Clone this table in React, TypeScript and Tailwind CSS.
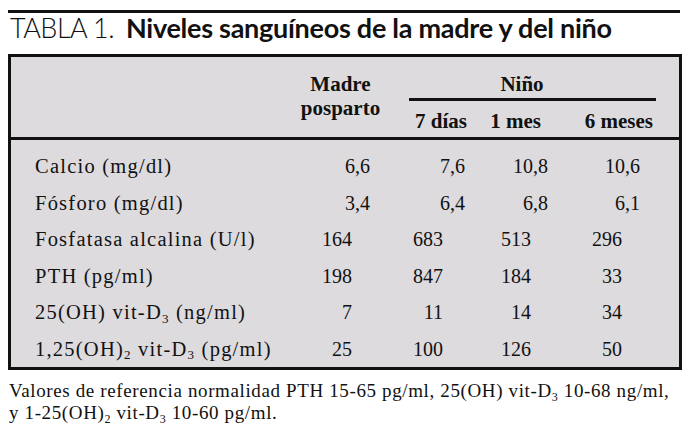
import React from "react";

type Cell = { v: string; dec: boolean };
const serif = "font-['Liberation_Serif','Times_New_Roman',serif]";

const D3 = () => (
  <>
    vit-D<sub className="text-[13px] bottom-[-0.3em]">3</sub>
  </>
);

const rows: { label: React.ReactNode; cells: Cell[] }[] = [
  {
    label: "Calcio (mg/dl)",
    cells: [
      { v: "6,6", dec: true },
      { v: "7,6", dec: true },
      { v: "10,8", dec: true },
      { v: "10,6", dec: true },
    ],
  },
  {
    label: "Fósforo (mg/dl)",
    cells: [
      { v: "3,4", dec: true },
      { v: "6,4", dec: true },
      { v: "6,8", dec: true },
      { v: "6,1", dec: true },
    ],
  },
  {
    label: "Fosfatasa alcalina (U/l)",
    cells: [
      { v: "164", dec: false },
      { v: "683", dec: false },
      { v: "513", dec: false },
      { v: "296", dec: false },
    ],
  },
  {
    label: "PTH (pg/ml)",
    cells: [
      { v: "198", dec: false },
      { v: "847", dec: false },
      { v: "184", dec: false },
      { v: "33", dec: false },
    ],
  },
  {
    label: (
      <>
        25(OH) <D3 /> (ng/ml)
      </>
    ),
    cells: [
      { v: "7", dec: false },
      { v: "11", dec: false },
      { v: "14", dec: false },
      { v: "34", dec: false },
    ],
  },
  {
    label: (
      <>
        1,25(OH)<sub className="text-[13px] bottom-[-0.3em]">2</sub> <D3 /> (pg/ml)
      </>
    ),
    cells: [
      { v: "25", dec: false },
      { v: "100", dec: false },
      { v: "126", dec: false },
      { v: "50", dec: false },
    ],
  },
];

const colW = ["w-[105px]", "w-[90px]", "w-[80px]", "w-[114px]"];
const decPr = ["pr-[25px]", "pr-[20px]", "pr-[17px]", "pr-[39px]"];
const intPr = ["pr-[43px]", "pr-[42px]", "pr-[34px]", "pr-[57px]"];

export default function App() {
  return (
    <div className="w-[690px] h-[436px] bg-white text-[#111] overflow-hidden">
      <div className="pt-[10px] pl-[8px] w-[682px]">
        <div className="h-[3px] w-[672px] bg-[#111]" />
        <div className="font-['Lato',sans-serif] text-[27px] leading-[30px] pl-[2px] whitespace-nowrap">
          <span className="font-light tracking-[-0.02em]">TABLA 1.</span>
          <span className="font-bold ml-[12px] tracking-[-0.01em]">
            Niveles sanguíneos de la madre y del niño
          </span>
        </div>
        <div className={`mt-[11px] w-[674px] border-[3px] border-[#111] bg-[#dddbde] ${serif}`}>
          {/* header */}
          <div className="flex h-[83px] border-b-[3px] border-[#111] font-bold text-[21px] leading-[24px]">
            <div className="w-[279px]" />
            <div className="w-[105px] pt-[15px] pr-[4px] text-center">
              <div>Madre</div>
              <div>posparto</div>
            </div>
            <div className="w-[284px] pt-[15px] flex flex-col">
              <div className="ml-[14px] mr-[23px] pr-[21px] text-center">Niño</div>
              <div className="ml-[14px] mr-[23px] mt-[2px] h-[3px] bg-[#111]" />
              <div className="flex mt-[8px]">
                <div className="w-[90px] pr-[18px] text-right">7 días</div>
                <div className="w-[80px] pr-[24px] text-right">1 mes</div>
                <div className="w-[114px] pr-[26px] text-right">6 meses</div>
              </div>
            </div>
          </div>
          {/* body */}
          <div className="pt-[8px] h-[227px]">
            {rows.map((r, i) => (
              <div key={i} className="flex items-baseline h-[36.5px] leading-[36.5px]">
                <div className="w-[279px] pl-[24px] text-[20.5px] tracking-[0.06em] whitespace-nowrap">
                  {r.label}
                </div>
                {r.cells.map((c, j) => (
                  <div
                    key={j}
                    className={`${colW[j]} ${c.dec ? decPr[j] : intPr[j]} text-right text-[20px]`}
                  >
                    {c.v}
                  </div>
                ))}
              </div>
            ))}
          </div>
        </div>
        <div className={`${serif} text-[19px] leading-[22px] mt-[10px] pl-[1px] tracking-[0.033em] whitespace-nowrap`}>
          <div>
            Valores de referencia normalidad PTH 15-65 pg/ml, 25(OH) vit-D
            <sub className="text-[12px] bottom-[-0.3em]">3</sub> 10-68 ng/ml,
          </div>
          <div>
            y 1-25(OH)<sub className="text-[12px] bottom-[-0.3em]">2</sub> vit-D
            <sub className="text-[12px] bottom-[-0.3em]">3</sub> 10-60 pg/ml.
          </div>
        </div>
      </div>
    </div>
  );
}
